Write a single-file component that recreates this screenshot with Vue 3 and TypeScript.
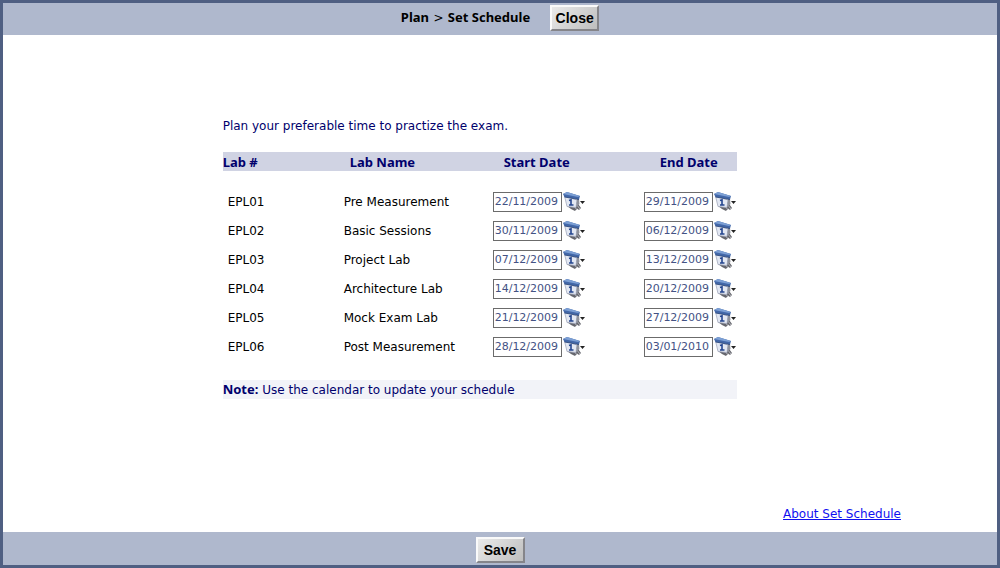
<script setup lang="ts">
import { reactive } from 'vue'

interface Lab {
  id: string
  name: string
  start: string
  end: string
}

const labs = reactive<Lab[]>([
  { id: 'EPL01', name: 'Pre Measurement', start: '22/11/2009', end: '29/11/2009' },
  { id: 'EPL02', name: 'Basic Sessions', start: '30/11/2009', end: '06/12/2009' },
  { id: 'EPL03', name: 'Project Lab', start: '07/12/2009', end: '13/12/2009' },
  { id: 'EPL04', name: 'Architecture Lab', start: '14/12/2009', end: '20/12/2009' },
  { id: 'EPL05', name: 'Mock Exam Lab', start: '21/12/2009', end: '27/12/2009' },
  { id: 'EPL06', name: 'Post Measurement', start: '28/12/2009', end: '03/01/2010' },
])

const fields = [
  { key: 'start', label: 'start date' },
  { key: 'end', label: 'end date' },
] as const
</script>

<template>
  <div class="window">
    <header class="bar top">
      <h1 class="title">Plan <span class="sep">&gt;</span> Set Schedule</h1>
      <button type="button" class="btn">Close</button>
    </header>

    <main class="content">
      <section class="schedule">
        <p class="intro">Plan your preferable time to practize the exam.</p>
        <table class="labs">
          <colgroup>
            <col class="c-id" />
            <col class="c-name" />
            <col class="c-start" />
            <col class="c-end" />
          </colgroup>
          <thead>
            <tr>
              <th class="h-id">Lab #</th>
              <th class="h-name">Lab Name</th>
              <th class="h-start">Start Date</th>
              <th class="h-end">End Date</th>
            </tr>
          </thead>
          <tbody>
            <tr v-for="lab in labs" :key="lab.id">
              <td class="id">{{ lab.id }}</td>
              <td>{{ lab.name }}</td>
              <td v-for="f in fields" :key="f.key">
                <div class="date">
                  <input v-model="lab[f.key]" type="text" :aria-label="`${lab.id} ${f.label}`" />
                  <button type="button" class="picker" :aria-label="`Choose ${lab.id} ${f.label}`">
                    <svg width="23" height="20" viewBox="0 0 23 20" aria-hidden="true">
                      <path d="M4 14 13 9 18 16 16 18 14 16.500 12 19 8 17z" fill="#66676e" />
                      <path d="M13 12 17 17M11 14 14 18" stroke="#b4b5bb" stroke-width="1" />
                      <path d="M1.500 4 14 8 13 15.500 4 14.500z" fill="#e3e8f3" stroke="#a3aabd" stroke-width=".8" />
                      <path d="M14 7 16 7 16.500 12 13.500 15z" fill="#8f929c" />
                      <path d="M0 2 4 0 17 4 16 7.500 1.500 5z" fill="#4267a8" />
                      <path d="M0 2 4 0 17 4 15 5z" fill="#7c9fd4" />
                      <path d="M1.500 5 16 7.500" stroke="#2b4577" stroke-width=".8" />
                      <path d="M6 8.500 8 7.800V12.500M6 13H10.500" fill="none" stroke="#24458f" stroke-width="1.600" />
                      <path d="M17 9H22L19.500 12z" fill="#222" />
                    </svg>
                  </button>
                </div>
              </td>
            </tr>
          </tbody>
        </table>
        <p class="note"><strong>Note:</strong> Use the calendar to update your schedule</p>
      </section>
      <a class="about" href="#about">About Set Schedule</a>
    </main>

    <footer class="bar bottom">
      <button type="button" class="btn">Save</button>
    </footer>
  </div>
</template>

<style>
body {
  margin: 0;
}
</style>

<style scoped>
.window {
  box-sizing: border-box;
  min-height: 100vh;
  display: flex;
  flex-direction: column;
  border: 3px solid #4f5f82;
  background: #fff;
  font-family: "DejaVu Sans", Verdana, sans-serif;
  font-size: 12px;
  line-height: 18px;
  color: #000;
}
.bar {
  box-sizing: border-box;
  display: flex;
  align-items: center;
  justify-content: center;
  background: #afb8cd;
}
.top {
  height: 32px;
  gap: 20px;
  padding-bottom: 3px;
}
.bottom {
  height: 33px;
  padding-top: 2px;
}
.title,
th,
strong {
  font-family: "Noto Sans", Tahoma, sans-serif;
  font-size: 13px;
  font-weight: bold;
}
.title {
  margin: 0;
}
.sep {
  padding: 0 1px;
  font-family: "DejaVu Sans", Verdana, sans-serif;
  font-size: 12px;
  font-weight: normal;
}
.btn {
  min-width: 49px;
  height: 26px;
  padding: 0 3px;
  border: 2px solid;
  border-color: #fafafa #85858a #85858a #fafafa;
  background: linear-gradient(135deg, #eaeaea, #bebebe);
  font: bold 14px "Liberation Sans", Arial, sans-serif;
  color: #000;
}
.content {
  flex: 1;
  display: flex;
  flex-direction: column;
}
.schedule {
  width: 514px;
  margin: 82px 0 0 22.1%;
  color: #00006c;
}
.intro {
  margin: 0 0 17px;
}
.labs {
  width: 100%;
  table-layout: fixed;
  border-collapse: collapse;
}
.c-id {
  width: 121px;
}
.c-name {
  width: 149px;
}
.c-start {
  width: 151px;
}
th {
  height: 19px;
  padding: 0;
  background: #d0d3e3;
  text-align: left;
}
.h-name {
  padding-left: 6px;
}
.h-start {
  padding-left: 11px;
}
.h-end {
  padding-left: 16px;
}
tbody {
  color: #000;
}
tbody::before {
  content: "";
  display: block;
  height: 16px;
}
td {
  height: 29px;
  padding: 0;
}
.id {
  padding-left: 5px;
}
.date {
  display: flex;
  align-items: center;
  gap: 1px;
}
.date input {
  box-sizing: border-box;
  width: 69px;
  height: 20px;
  padding: 0 1px;
  border: 1px solid #6b6b6b;
  border-radius: 0;
  background: #fff;
  font: 11px "DejaVu Sans", Verdana, sans-serif;
  color: #435284;
}
.picker {
  padding: 0;
  border: 0;
  background: none;
}
.picker svg {
  display: block;
}
.note {
  margin: 19px 0 0;
  background: #f2f3f8;
}
.about {
  margin: auto 96px 9px auto;
  color: #1010f0;
}
</style>
